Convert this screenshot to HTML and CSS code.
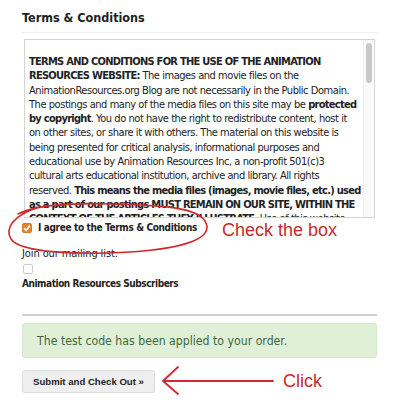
FILE: index.html
```html
<!DOCTYPE html>
<html>
<head>
<meta charset="utf-8">
<link rel="stylesheet" href="styles.css">
</head>
<body>
<div class="page">
  <h2 class="title">Terms &amp; Conditions</h2>
  <div class="terms-wrap">
    <div class="terms-box">
      <div class="terms-text">
        <b>TERMS AND CONDITIONS FOR THE USE OF THE ANIMATION<br>RESOURCES WEBSITE:</b> The images and movie files on the<br>AnimationResources.org Blog are not necessarily in the Public Domain.<br>The postings and many of the media files on this site may be <b>protected<br>by copyright</b>. You do not have the right to redistribute content, host it<br>on other sites, or share it with others. The material on this website is<br>being presented for critical analysis, informational purposes and<br>educational use by Animation Resources Inc, a non-profit 501(c)3<br>cultural arts educational institution, archive and library. All rights<br>reserved. <b>This means the media files (images, movie files, etc.) used<br>as a part of our postings MUST REMAIN ON OUR SITE, WITHIN THE<br>CONTEXT OF THE ARTICLES THEY ILLUSTRATE</b>. Use of this website<br>constitutes acceptance of these terms.
      </div>
      <div class="scrollbar"><div class="thumb"></div></div>
    </div>
  </div>
  <label class="agree"><span class="check checked"><svg width="8" height="8" viewBox="0 0 8 8"><path d="M1 4.2 L3.2 6.3 L7 1.5" fill="none" stroke="#fff" stroke-width="1.6"/></svg></span><b>I agree to the Terms &amp; Conditions</b></label>
  <div class="mailing">
    <div class="label">Join our mailing list.</div>
    <span class="check"></span>
    <div class="label bold">Animation Resources Subscribers</div>
  </div>
  <hr class="rule">
  <div class="alert">The test code has been applied to your order.</div>
  <div class="actions">
    <button class="submit">Submit and Check Out »</button>
  </div>

  <svg class="ann-ellipse" width="220" height="64" viewBox="0 0 220 64">
    <path d="M18 19 C 40 8, 80 8, 110 9 C 160 10, 200 12, 206 28 C 212 42, 190 53, 130 57 C 80 60, 20 58, 11 44 C 5 34, 12 20, 40 12" fill="none" stroke="#d0282c" stroke-width="1.6" stroke-linecap="round"/>
  </svg>
  <div class="ann-text check-text">Check the box</div>
  <svg class="ann-arrow" width="120" height="34" viewBox="0 0 120 34">
    <path d="M2 15 L112 15 M2 15 L17 1 M2 15 L17 28" fill="none" stroke="#d0282c" stroke-width="1.8" stroke-linecap="round"/>
  </svg>
  <div class="ann-text click-text">Click</div>
</div>
</body>
</html>
```
FILE: styles.css
```css
html, body { margin: 0; padding: 0; background: #fff; }
body { font-family: "DejaVu Sans Condensed", "DejaVu Sans", sans-serif; color: #222; }
.page { position: relative; width: 400px; height: 416px; padding: 10px 23px 0 22px; box-sizing: border-box; }
.title { margin: 0; font-size: 12.5px; font-weight: bold; line-height: 16px; color: #1e1e1e; padding-bottom: 6px; border-bottom: 1px solid #f0f0f0; }
.terms-wrap { padding: 6px 2px 0 2px; }
.terms-box { position: relative; height: 177px; border: 1px solid #d4d4d4; overflow: hidden; }
.terms-text { padding: 15px 10px 0 4px; font-size: 11px; line-height: 14.3px; letter-spacing: -0.45px; white-space: nowrap; }
.terms-text b { letter-spacing: -0.72px; }
.scrollbar { position: absolute; top: 0; right: 0; width: 10px; height: 100%; background: #fafafa; border-left: 1px solid #eee; }
.thumb { margin: 3px 2px 0 2px; height: 40px; background: #c8c8c8; border-radius: 3px; }
.agree { display: flex; align-items: center; gap: 6px; margin-top: 3px; font-size: 10px; line-height: 14px; letter-spacing: -0.35px; }
.check { display: inline-flex; align-items: center; justify-content: center; width: 8px; height: 8px; border: 1px solid #ccc; border-radius: 2px; background: #fff; box-sizing: content-box; }
.check.checked { background: #e8832a; border-color: #d9782a; }
.mailing { margin-top: 12px; font-size: 11px; line-height: 14px; letter-spacing: -0.1px; }
.mailing .check { display: flex; margin: 3px 0 3px 1px; }
.label.bold { font-weight: bold; font-size: 10px; letter-spacing: -0.45px; }
.rule { margin: 23px 0 0 0; border: 0; border-top: 2px solid #cfcfcf; }
.alert { margin-top: 7px; background: #e0efd8; color: #3c6a3a; border: 1px solid #d6e9c6; border-radius: 3px; padding: 0 14px; height: 35px; line-height: 35px; font-size: 12.2px; box-sizing: border-box; }
.actions { margin-top: 12px; }
.submit { font-family: "Liberation Sans", Arial, sans-serif; font-weight: bold; font-size: 9.6px; color: #222; background: #efefef; border: 1px solid #dcdcdc; border-radius: 3px; height: 23px; width: 133px; padding: 0; }
.ann-ellipse { position: absolute; left: 0; top: 195px; }
.ann-text { position: absolute; font-family: "Liberation Sans", Arial, sans-serif; color: #c62a2e; font-size: 18px; line-height: 20px; }
.check-text { left: 222px; top: 220px; }
.ann-arrow { position: absolute; left: 161px; top: 366px; }
.click-text { left: 283px; top: 371px; }
```
